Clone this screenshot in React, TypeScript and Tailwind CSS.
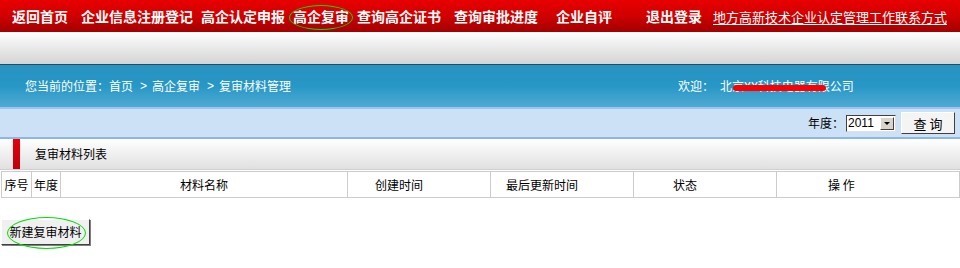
const font = "font-['SimSun','Noto_Sans_CJK_SC',sans-serif]";

const navItems: [string, string][] = [
  ["返回首页", "ml-[12px]"],
  ["企业信息注册登记", "ml-[13px]"],
  ["高企认定申报", "ml-[8px]"],
  ["高企复审", "ml-[8px]"],
  ["查询高企证书", "ml-[8px]"],
  ["查询审批进度", "ml-[13px]"],
  ["企业自评", "ml-[18px]"],
  ["退出登录", "ml-[34px]"],
];

const cols = [
  { label: "序号", w: "w-[30px]", cls: "justify-center" },
  { label: "年度", w: "w-[29px]", cls: "justify-center" },
  { label: "材料名称", w: "w-[287px]", cls: "justify-center" },
  { label: "创建时间", w: "w-[143px]", cls: "pl-[27px]" },
  { label: "最后更新时间", w: "w-[143px]", cls: "pl-[15px]" },
  { label: "状态", w: "w-[143px]", cls: "pl-[39px]" },
  { label: "操 作", w: "flex-1", cls: "pl-[51px]" },
];

export default function App() {
  return (
    <div className={`relative w-[960px] h-[268px] overflow-hidden bg-white text-[12px] text-black ${font}`}>
      {/* top nav */}
      <div className="h-[32px] flex items-center bg-gradient-to-b from-[#e80000] via-[#d00000] to-[#a20000] text-white">
        {navItems.map(([t, m]) => (
          <span key={t} className={`${m} text-[14px] font-bold leading-none`}>
            {t}
          </span>
        ))}
        <span className="ml-[11px] text-[13px] leading-none underline underline-offset-2">
          地方高新技术企业认定管理工作联系方式
        </span>
      </div>

      {/* gray strip */}
      <div className="h-[32px] bg-gradient-to-b from-white to-[#d4d4d4]" />

      {/* breadcrumb bar */}
      <div className="h-[43px] border-t border-[#1d4f6a] bg-gradient-to-b from-[#2a92c1] via-[#2697c6] to-[#4eaad3] flex items-center text-white">
        <div className="ml-[25px] w-[653px] flex items-center">
          <span>您当前的位置：首页</span>
          <span className="ml-[7px] font-['Liberation_Sans',sans-serif]">&gt;</span>
          <span className="ml-[5px]">高企复审</span>
          <span className="ml-[7px] font-['Liberation_Sans',sans-serif]">&gt;</span>
          <span className="ml-[5px]">复审材料管理</span>
        </div>
        <span>欢迎：</span>
        <span className="ml-[6px] relative">
          北京XX科技电器有限公司
          <span className="absolute left-[13px] top-[8px] w-[93px] h-[6px] rounded-full bg-[#ff0000]" />
        </span>
      </div>

      {/* search bar */}
      <div className="h-[32px] border-t-2 border-[#9cc4ec] border-b-2 border-b-[#8cb8e6] bg-[#cce0f6] flex items-center justify-end pr-[5px]">
        <span>年度：</span>
        <div className="ml-[2px] w-[50px] h-[17px] border border-[#404040] border-r-[#e0e0e0] border-b-[#e0e0e0] bg-white flex items-center">
          <span className="pl-[1px] font-['Liberation_Sans',sans-serif] text-[12px] leading-none">2011</span>
          <span className="ml-auto mr-[1px] w-[14px] h-[13px] bg-[#d8d4cc] border border-[#fff] border-r-[#404040] border-b-[#404040] flex items-center justify-center">
            <span className="w-0 h-0 border-l-[3px] border-r-[3px] border-t-[3px] border-l-transparent border-r-transparent border-t-black" />
          </span>
        </div>
        <button className="ml-[5px] w-[54px] h-[22px] bg-[#f4f4f4] border border-[#fff] border-r-[#404040] border-b-[#404040] text-[13px] leading-none">
          查 询
        </button>
      </div>

      {/* section title */}
      <div className="h-[31px] bg-gradient-to-b from-white to-[#e0e0e0] border-b border-[#d0d0d0] flex items-center">
        <div className="ml-[13px] w-[7px] h-full bg-gradient-to-b from-[#e8000a] to-[#c0000a]" />
        <span className="ml-[15px]">复审材料列表</span>
      </div>

      {/* table header */}
      <div className="mt-[1px] ml-[1px] h-[27px] flex border border-[#cccccc]">
        {cols.map((c, i) => (
          <div
            key={c.label}
            className={`${c.w} ${c.cls} flex items-center ${i < cols.length - 1 ? "border-r border-[#cccccc]" : ""}`}
          >
            {c.label}
          </div>
        ))}
      </div>

      {/* new button */}
      <button className="mt-[21px] ml-[1px] w-[89px] h-[26px] bg-[#f0f0f0] border border-[#fff] border-r-[#404040] border-b-[#404040] shadow-[1px_1px_0_#808080] text-[12px] leading-none">
        新建复审材料
      </button>

      {/* green annotations */}
      <div className="absolute left-[289px] top-[5px] w-[64px] h-[25px] rounded-[50%] border border-[#00e000]" />
      <div className="absolute left-[7px] top-[217px] w-[79px] h-[32px] rounded-[50%] border border-[#00e000]" />
    </div>
  );
}
